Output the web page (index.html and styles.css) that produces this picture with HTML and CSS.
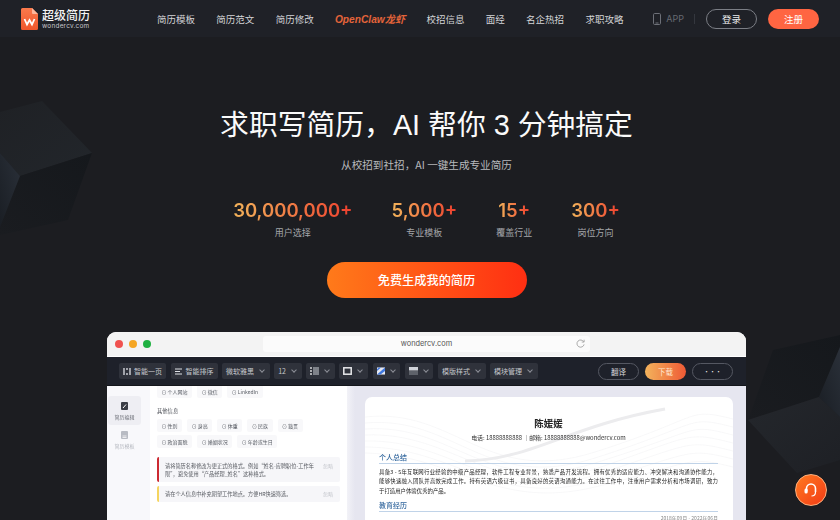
FILE: index.html
```html
<!DOCTYPE html>
<html lang="zh-CN">
<head>
<meta charset="utf-8">
<title>超级简历</title>
<link rel="stylesheet" href="styles.css">
</head>
<body>
<div class="page">
  <svg class="cubes" width="840" height="520" viewBox="0 0 840 520" aria-hidden="true">
    <defs>
      <linearGradient id="gl" x1="0" y1="0" x2="1" y2="1"><stop offset="0" stop-color="#24272c"/><stop offset="1" stop-color="#1e2025"/></linearGradient>
      <linearGradient id="gs" x1="1" y1="0" x2="0" y2="1"><stop offset="0" stop-color="#2a3039"/><stop offset="1" stop-color="#1a1e24"/></linearGradient>
      <linearGradient id="gd" x1="1" y1="0" x2="0" y2="1"><stop offset="0" stop-color="#15181c"/><stop offset="1" stop-color="#1a1c20"/></linearGradient>
      <linearGradient id="gt" x1="0" y1="0" x2="1" y2="1"><stop offset="0" stop-color="#1f2125"/><stop offset="1" stop-color="#22262b"/></linearGradient>
    </defs>
    <polygon points="0,112 42,101 92,153 20,176 0,153" fill="url(#gt)"/>
    <polygon points="20,176 92,153 68,220 0,235 0,227" fill="url(#gd)"/>
    <polygon points="0,153 20,176 0,227" fill="url(#gs)"/>
    <polygon points="773,350 840,335 840,347 819,397 748,420" fill="url(#gd)"/>
    <polygon points="748,420 819,397 840,417 840,460 797,473" fill="url(#gl)"/>
    <polygon points="840,347 819,397 840,417" fill="url(#gs)"/>
  </svg>

  <header class="topbar">
    <a class="brand">
      <svg class="brand-icon" width="17" height="22" viewBox="0 0 17 22">
        <defs><linearGradient id="lg" x1="0" y1="0" x2="0" y2="1"><stop offset="0" stop-color="#fb7a4c"/><stop offset="1" stop-color="#f0562b"/></linearGradient></defs>
        <path d="M1.5 0H11L17 6V20.5A1.5 1.5 0 0 1 15.500 22H1.500A1.500 1.500 0 0 1 0 20.500V1.500A1.500 1.500 0 0 1 1.500 0Z" fill="url(#lg)"/>
        <path d="M11 0L17 6H12A1 1 0 0 1 11 5Z" fill="#fdb79c"/>
        <path d="M3.500 11L6 16.500L8.500 12L11 16.500L13.500 11" fill="none" stroke="#fff" stroke-width="1.800"/>
      </svg>
      <span class="brand-text"><b>超级简历</b><small>wondercv.com</small></span>
    </a>
    <nav class="nav">
      <a>简历模板</a><a>简历范文</a><a>简历修改</a><a class="claw">OpenClaw龙虾</a><a>校招信息</a><a>面经</a><a>名企热招</a><a>求职攻略</a>
    </nav>
    <div class="actions">
      <svg width="8" height="12" viewBox="0 0 8 12"><rect x=".5" y=".5" width="7" height="11" rx="1.200" fill="none" stroke="#6d7078"/><path d="M2.500 10h3" stroke="#6d7078"/></svg>
      <span class="app">APP</span>
      <i class="divider"></i>
      <a class="btn btn-line">登录</a>
      <a class="btn btn-fill">注册</a>
    </div>
  </header>

  <main class="hero">
    <h1>求职写简历，AI 帮你 3 分钟搞定</h1>
    <p class="sub">从校招到社招，AI 一键生成专业简历</p>
    <ul class="stats">
      <li><strong>30,000,000+</strong><span>用户选择</span></li>
      <li><strong>5,000+</strong><span>专业模板</span></li>
      <li><strong>15+</strong><span>覆盖行业</span></li>
      <li><strong>300+</strong><span>岗位方向</span></li>
    </ul>
    <a class="cta">免费生成我的简历</a>

    <section class="window">
      <div class="titlebar">
        <i class="dot red"></i><i class="dot amber"></i><i class="dot green"></i>
        <div class="url">wondercv.com
          <svg class="reload" width="9" height="9" viewBox="0 0 10 10"><path d="M8.500 3A4 4 0 1 0 9 6" fill="none" stroke="#9a9a9a" stroke-width=".9"/><path d="M9 .8V3.400H6.400" fill="none" stroke="#9a9a9a" stroke-width=".9"/></svg>
        </div>
      </div>
      <div class="toolbar">
        <span class="tool"><svg width="8" height="7" viewBox="0 0 8 7"><path d="M1 0v7M7 0v7M4 0v2M4 5v2" stroke="#dfe1e6" stroke-width="1.300"/></svg>智能一页</span>
        <span class="tool"><svg width="8" height="7" viewBox="0 0 8 7"><path d="M0 1h7M0 3.500h5M0 6h7" stroke="#dfe1e6"/></svg>智能排序</span>
        <span class="tool">微软雅黑<i class="caret"></i></span>
        <span class="tool">12<i class="caret"></i></span>
        <span class="tool"><svg width="9" height="8" viewBox="0 0 9 8"><path d="M3 1h6M3 3h6M3 5h6M3 7h6" stroke="#cfd2d8"/><path d="M1 0v8" stroke="#fff" stroke-width="1.200" stroke-dasharray="2 1"/></svg><i class="caret"></i></span>
        <span class="tool"><svg width="9" height="8" viewBox="0 0 9 8"><rect x=".8" y=".8" width="7.400" height="6.400" fill="none" stroke="#e8e9ec" stroke-width="1.500"/></svg><i class="caret"></i></span>
        <span class="tool"><svg width="8" height="8" viewBox="0 0 9 8"><rect width="9" height="8" fill="#e6e8f0"/><path d="M0 8L9 0V4L4 8Z" fill="#3f78e0"/><path d="M0 4L4.500 0H2L0 2Z" fill="#3f78e0"/></svg><i class="caret"></i></span>
        <span class="tool"><svg width="9" height="8" viewBox="0 0 9 8"><rect width="9" height="3.500" fill="#cfd2d8"/><path d="M0 5h9M0 7h9" stroke="#8e929a"/></svg><i class="caret"></i></span>
        <span class="tool">模版样式<i class="caret"></i></span>
        <span class="tool">模块管理<i class="caret"></i></span>
        <span class="tb-right">
          <a class="pill">翻译</a>
          <a class="pill pill-orange">下载</a>
          <a class="pill pill-more">•••</a>
        </span>
      </div>
      <div class="workspace">
        <aside class="side">
          <div class="side-item active">
            <svg width="7" height="8" viewBox="0 0 7 8"><rect width="7" height="8" rx="1" fill="#3a3d45"/><path d="M2 6L5 2.500" stroke="#fff"/></svg>
            <span>简历编辑</span>
          </div>
          <div class="side-item">
            <svg width="7" height="8" viewBox="0 0 7 8"><rect width="7" height="8" rx="1" fill="#b8bbc3"/><path d="M1.500 5h4M1.500 6.500h4" stroke="#fff" stroke-width=".7"/></svg>
            <span>简历模板</span>
          </div>
        </aside>
        <div class="editor">
          <div class="chips"><span>⊙ 个人网站</span><span>⊙ 微信</span><span>⊙ LinkedIn</span></div>
          <h4>其他信息</h4>
          <div class="chips"><span>⊙ 性别</span><span>⊙ 身高</span><span>⊙ 体重</span><span>⊙ 民族</span><span>⊙ 籍贯</span></div>
          <div class="chips"><span>⊙ 政治面貌</span><span>⊙ 婚姻状况</span><span>⊙ 年龄或生日</span></div>
          <div class="note note-red"><p>请将简历名称修改为更正式的格式。例如“姓名-应聘职位-工作年限”，避免使用“产品经理_姓名”这种格式。</p><em>忽略</em></div>
          <div class="note note-yellow"><p>请在个人信息中补充期望工作地点。方便HR快速筛选。</p><em>忽略</em></div>
        </div>
        <div class="preview">
          <article class="paper">
            <svg class="waves" width="368" height="122" viewBox="0 0 368 122" preserveAspectRatio="none" aria-hidden="true">
              <g fill="none" stroke="#f1f1f3" stroke-width=".5">
                <path d="M0 20C90 10 120 90 230 55S320 10 368 22"/>
                <path d="M0 26C90 18 120 96 230 61S320 18 368 30"/>
                <path d="M0 32C90 26 120 100 230 66S320 26 368 38"/>
                <path d="M0 38C90 34 130 106 230 72S320 34 368 46"/>
                <path d="M0 44C90 42 130 110 230 78S320 42 368 54"/>
                <path d="M0 50C90 50 130 112 230 84S320 50 368 62"/>
                <path d="M0 56C90 58 130 114 230 90S320 58 368 70"/>
                <path d="M100 64C170 62 200 30 300 12" stroke="#ececee" stroke-width="3"/>
              </g>
            </svg>
            <h2>陈媛媛</h2>
            <p class="contact">电话: 18888888888 ｜邮箱: 18888888888@wondercv.com</p>
            <h3>个人总结</h3>
            <p class="body"><span>具备3 - 5年互联网行业经验的中级产品经理，软件工程专业背景，熟悉产品开发流程。拥有优秀的适应能力、冲突解决和沟通协作能力，</span><span>能够快速融入团队并高效完成工作。持有英语六级证书，具备良好的英语沟通能力。在过往工作中，注重用户需求分析和市场调研，致力</span>于打造用户体验优秀的产品。</p>
            <h3>教育经历</h3>
            <p class="date">2018年09月 - 2022年06月</p>
          </article>
        </div>
      </div>
    </section>
  </main>

  <a class="support" aria-label="客服">
    <svg width="20" height="20" viewBox="0 0 20 20"><path d="M5.500 11V8.500A4.500 4.500 0 0 1 14.500 8.500V12" fill="none" stroke="#fff" stroke-width="1.600"/><rect x="3.500" y="8.500" width="3.200" height="5" rx="1.500" fill="#fff"/><path d="M14.500 12C14.500 15 13 16 10.500 16" fill="none" stroke="#fff" stroke-width="1.200"/></svg>
  </a>
</div>
</body>
</html>
```

FILE: styles.css
```css
* { box-sizing: border-box; margin: 0; padding: 0; }
html, body { width: 840px; height: 520px; overflow: hidden; }
body {
  background: #1c1d21;
  color: #fff;
  font-family: "Noto Sans CJK SC", "Liberation Sans", sans-serif;
}
a { display: inline-block; }
ul { list-style: none; }
i, em { font-style: normal; }

.page { position: relative; width: 840px; height: 520px; overflow: hidden; }
.cubes { position: absolute; left: 0; top: 0; }

.topbar {
  position: relative;
  height: 37px;
  background: #1f2127;
  display: flex;
  align-items: center;
  padding: 0 21px;
}
.brand { display: flex; align-items: center; gap: 4px; width: 136px; }
.brand-text { display: flex; flex-direction: column; }
.brand-text b { font-size: 12px; line-height: 14px; font-weight: 500; color: #f4f4f5; }
.brand-text small { font-family: Inter, "Liberation Sans", sans-serif; font-size: 6.400px; line-height: 8px; color: #c6c8cc; letter-spacing: .25px; }
.nav { display: flex; gap: 21.300px; align-items: center; font-size: 9.500px; color: #d4d5d8; }
.nav .claw { color: #e4643a; font-family: "Liberation Sans", "Noto Sans CJK SC", sans-serif; font-weight: 700; font-style: italic; font-size: 10.200px; }
.actions { margin-left: auto; display: flex; align-items: center; }
.app { font-family: Inter, "Liberation Sans", sans-serif; font-size: 9px; color: #666a72; margin-left: 5px; }
.divider { width: 1px; height: 10px; background: #34373e; margin: 0 11px 0 10px; }
.btn { width: 51px; height: 20px; border-radius: 10px; font-size: 9.500px; line-height: 20px; text-align: center; }
.btn-line { border: 1px solid #7b7e85; line-height: 18px; color: #eceded; margin-right: 11px; }
.btn-fill { background: #ff6542; color: #fff; }

.hero {
  position: relative;
  display: flex;
  flex-direction: column;
  align-items: center;
  padding: 68px 0 0 13px;
}
.hero h1 { font-size: 28.800px; line-height: 40px; font-weight: 400; color: #fafafa; white-space: nowrap; font-family: "Liberation Sans", "Noto Sans CJK SC", sans-serif; }
.sub { margin-top: 12px; font-size: 10.600px; line-height: 16px; color: #b8babd; }
.stats { display: flex; gap: 39px; margin-top: 25px; }
.stats li { display: flex; flex-direction: column; align-items: center; }
.stats strong {
  font-family: Inter, "Liberation Sans", sans-serif;
  font-size: 18.500px; line-height: 24px; font-weight: 600;
  background: linear-gradient(90deg, #f2b35a, #ee3f2e);
  -webkit-background-clip: text; background-clip: text; color: transparent;
}
.stats span { margin-top: 4px; font-size: 9px; line-height: 13px; color: #a4a6aa; }
.cta {
  margin-top: 23px; width: 200px; height: 36px; border-radius: 18px;
  background: linear-gradient(90deg, #ff7a1a, #ff2f12);
  font-size: 12.200px; line-height: 36px; font-weight: 500; text-align: center; color: #fff;
}

.window {
  margin-top: 34px; width: 639px; height: 260px; flex: none;
  border-radius: 9px 9px 0 0; overflow: hidden; background: #f3f3f3;
  display: flex; flex-direction: column;
}
.titlebar { height: 25px; display: flex; align-items: center; padding-left: 8px; gap: 6px; background: #f3f3f3; border-bottom: 1px solid #fff; flex: none; }
.dot { width: 8px; height: 8px; border-radius: 50%; }
.red { background: #f0524f; } .amber { background: #f5a623; } .green { background: #1fb141; }
.url {
  position: relative; width: 327px; height: 16px; margin-left: 106px;
  background: #fbfbfb; border-radius: 3px;
  font-family: Inter, "Liberation Sans", sans-serif; font-size: 7.400px; line-height: 16px; color: #555; text-align: center;
}
.reload { position: absolute; right: 5px; top: 3px; }
.toolbar {
  height: 29px; flex: none; background: #1e212a; border-bottom: 1px solid #14161b;
  display: flex; align-items: center; gap: 4.500px; padding: 0 13px 0 12px;
}
.tool {
  height: 16px; padding: 0 4px; border-radius: 2px; background: #2f323b;
  display: flex; align-items: center; gap: 3px; font-size: 7px; color: #c5c7cc; white-space: nowrap;
}
.caret { width: 4px; height: 4px; margin: -2px 1.700px 0 3px; border-right: 1px solid #8c8f97; border-bottom: 1px solid #8c8f97; transform: rotate(45deg); }
.tb-right { margin-left: auto; display: flex; gap: 6px; }
.pill { width: 41px; height: 17px; border-radius: 9px; border: 1px solid #555862; font-size: 7.500px; line-height: 15px; text-align: center; color: #d7d8db; }
.pill-orange { background: linear-gradient(90deg, #f3b35c, #ee5a35); border: 0; line-height: 17px; color: #ffe9d2; }
.pill-more { font-size: 6px; letter-spacing: 0; color: #f0f0f0; }

.workspace { flex: 1; display: flex; background: #fff; filter: blur(.25px); }
.side { width: 43px; flex: none; background: #f8f8fb; padding: 10px 1px; }
.side-item { width: 33px; height: 29px; border-radius: 3px; display: flex; flex-direction: column; align-items: center; justify-content: center; gap: 3px; font-size: 5px; color: #b4b7bf; }
.side-item.active { background: #eeeef3; color: #6b6e76; }
.editor { width: 197px; flex: none; padding: 0 7px; overflow: hidden; background: #fff; }
.chips { display: flex; gap: 5px; margin-bottom: 3px; }
.chips span { height: 13px; padding: 0 4.500px; border-radius: 2px; background: #f8f8fa; font-size: 5px; line-height: 13px; color: #565a62; white-space: nowrap; }
.chips:first-child { margin-top: -1.500px; }
.editor h4 { margin: 9.500px 0 4px; font-size: 5.300px; line-height: 8px; font-weight: 400; color: #4f5259; }
.note { display: flex; justify-content: space-between; gap: 8px; padding: 4.500px 7px 4.500px 6px; border-radius: 2px; background: #f6f6f9; margin-bottom: 4px; }
.note p { font-size: 5.200px; line-height: 8px; color: #55585f; width: 150px; flex: none; }
.note em { font-size: 5px; color: #c5c7cd; line-height: 8px; white-space: nowrap; flex: none; }
.note-red { border-left: 2px solid #cc2a32; margin-top: 9px; }
.note-yellow { border-left: 2px solid #f5d55f; padding-top: 4px; padding-bottom: 4px; }
.preview { flex: 1; background: linear-gradient(90deg, #f2f2f7 0, #e6e6f0 8px); padding: 11px 13px 0 18px; min-width: 0; }
.paper { position: relative; height: 200px; background: #fff; border-radius: 7px; padding: 19px 15px 0 14px; }
.waves { position: absolute; left: 0; top: 0; border-radius: 7px; }
.paper h2 { position: relative; font-size: 9.500px; line-height: 14px; text-align: center; color: #222; font-weight: 700; }
.contact { position: relative; font-size: 5.900px; line-height: 8px; margin-top: 4px; text-align: center; color: #333; }
.paper h3 { position: relative; margin-top: 11px; font-size: 7px; line-height: 9px; padding-bottom: 1px; font-weight: 500; color: #35699f; border-bottom: 1px solid #c0d3e8; }
.body { position: relative; margin-top: 4px; font-size: 5.400px; line-height: 9.300px; color: #222; }
.body span { display: block; text-align: justify; text-align-last: justify; white-space: nowrap; }
.paper h3 + .body + h3 { margin-top: 5px; }
.date { font-size: 5px; text-align: right; color: #888; margin-top: 2px; }

.support {
  position: absolute; left: 795px; top: 474px; width: 32px; height: 32px; border-radius: 50%;
  background: linear-gradient(135deg, #ff7a20, #f23b16); border: 1px solid #ffb07c;
  display: flex; align-items: center; justify-content: center;
}
```
